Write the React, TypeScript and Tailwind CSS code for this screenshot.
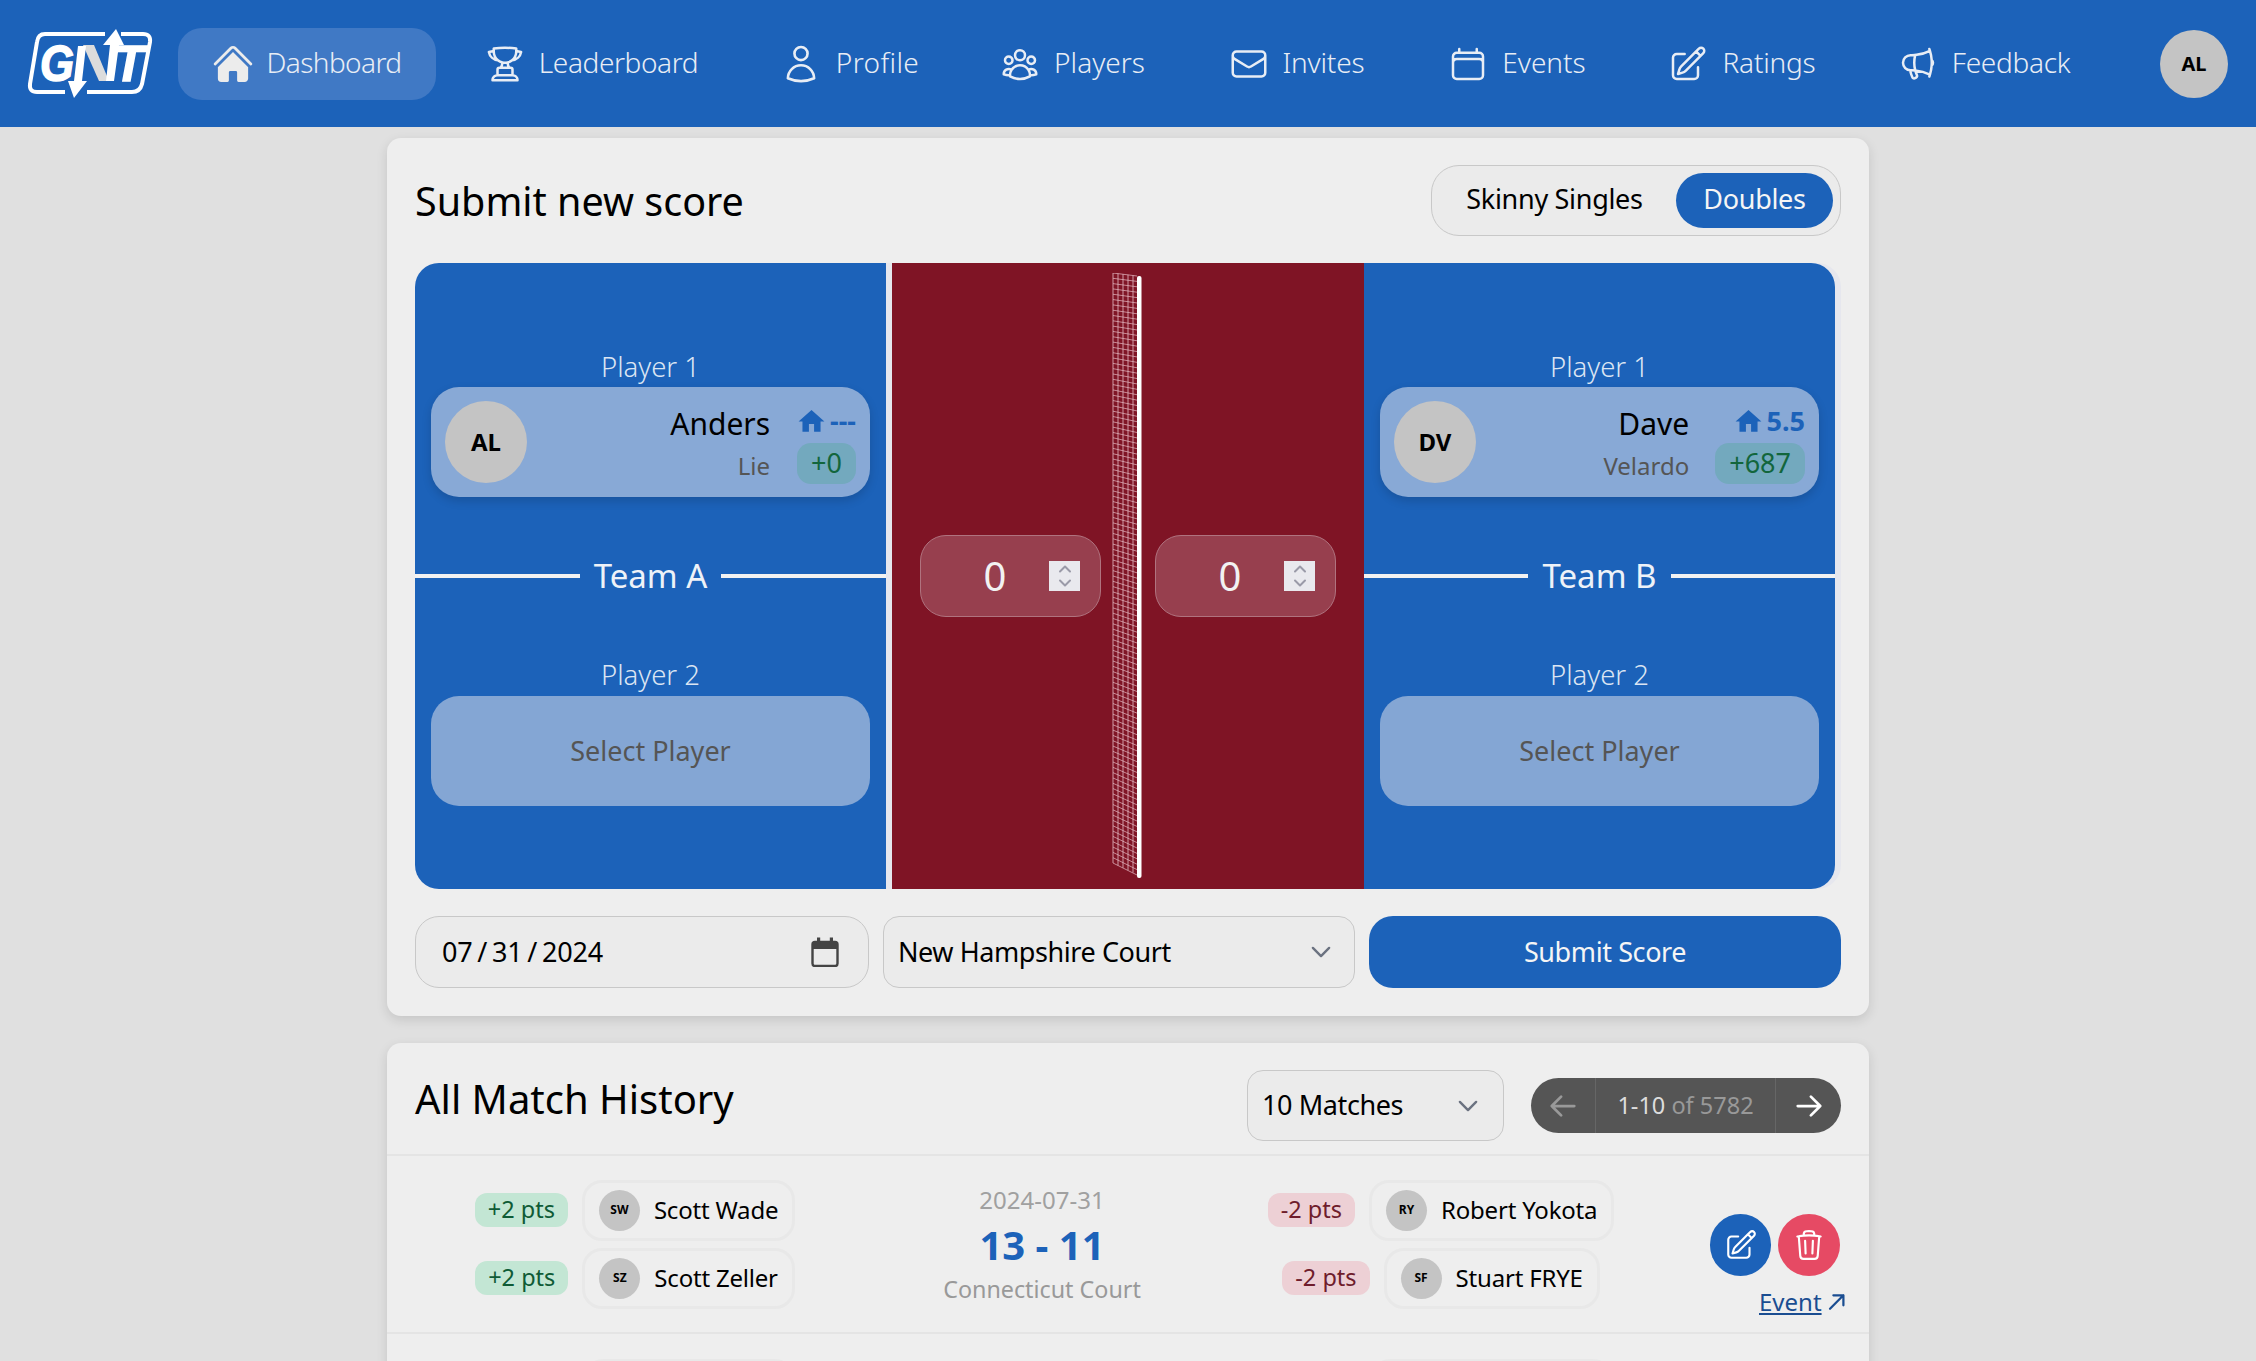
import React from "react";
import {
  HiHome,
  HiOutlineTrophy,
  HiOutlineUser,
  HiOutlineUserGroup,
  HiOutlineEnvelope,
  HiOutlineCalendar,
  HiOutlinePencilSquare,
  HiOutlineMegaphone,
  HiOutlineTrash,
  HiOutlineArrowLeft,
  HiOutlineArrowRight,
  HiOutlineArrowUpRight,
  HiOutlineChevronDown,
  HiOutlineChevronUp,
} from "react-icons/hi2";
import { MdHome } from "react-icons/md";

function Logo() {
  const font = "'Liberation Sans', sans-serif";
  return (
    <svg width="126" height="72" viewBox="26 28 126 72" className="shrink-0">
      <path d="M44 34 H142 Q150 34 149 42 L141 84 Q139 92 131 92 H36 Q28 92 29 84 L36 42 Q37 34 44 34 Z" fill="none" stroke="#fff" strokeWidth="4" />
      <rect x="104" y="30" width="16" height="8" fill="#1c62b9" />
      <rect x="64" y="88" width="22" height="8" fill="#1c62b9" />
      <text x="39" y="81" fontFamily={font} fontWeight="700" fontStyle="italic" fontSize="50" fill="#fff" stroke="#fff" strokeWidth="1.5" textLength="34" lengthAdjust="spacingAndGlyphs">G</text>
      <polygon points="82,45 93,45 108,81 98,81" fill="#dcdcdc" />
      <text x="113" y="81" fontFamily={font} fontWeight="700" fontStyle="italic" fontSize="50" fill="#fff" stroke="#fff" strokeWidth="1.5" textLength="30" lengthAdjust="spacingAndGlyphs">T</text>
      <polygon points="115,29 123,45 118,45 113,81 105,81 109,45 102,45" fill="#fff" />
      <polygon points="73,98 86,81 81,81 85,46 77,46 73,81 67,81" fill="#fff" />
    </svg>
  );
}

function Net() {
  const rows = Array.from({ length: 112 }, (_, i) => i / 111);
  const cols = [0, 1, 2, 3, 4];
  return (
    <svg width="34" height="610" viewBox="0 0 34 610" className="absolute left-[220px] top-[10px]">
      {rows.map((t) => (
        <line key={t} x1="1" y1={t * 590} x2="25" y2={3 + t * 599} stroke="#e8bcc6" strokeWidth="1" opacity="0.7" />
      ))}
      {cols.map((c) => (
        <line key={c} x1={1 + c * 5} y1={c * 0.6} x2={1 + c * 5} y2={590 + c * 2.4} stroke="#e8bcc6" strokeWidth="1" opacity="0.8" />
      ))}
      <rect x="25" y="3" width="4.5" height="602" rx="2" fill="#fff" />
    </svg>
  );
}

function NavItem({ w, icon, label, active, track }: { w: string; icon: React.ReactNode; label: string; active?: boolean; track?: string }) {
  return (
    <div className={`${w} h-[72px] flex items-center justify-center gap-[14px] rounded-[24px] text-[28px] font-light text-[#e8edf5] ${active ? "bg-[#4079c5]" : "pr-[2px]"}`}>
      {icon}
      <span className={`pb-[3px] ${track ?? ""}`}>{label}</span>
    </div>
  );
}

function Avatar({ t, cls }: { t: string; cls: string }) {
  return <div className={`rounded-full bg-[#c4c4c4] text-black font-bold flex items-center justify-center shrink-0 ${cls}`}>{t}</div>;
}

function PlayerCard({ a, first, last, rating, delta }: { a: string; first: string; last: string; rating: string; delta: string }) {
  return (
    <div className="h-[110px] rounded-[28px] bg-[#88a9d6] shadow-[0_4px_10px_rgba(0,0,0,0.15)] pl-[14px] pr-[14px] flex items-center">
      <Avatar t={a} cls="w-[82px] h-[82px] text-[24px]" />
      <div className="flex-1 flex flex-col items-end mr-[26px] pt-[3px]">
        <div className="text-[30px] leading-[38px] text-black">{first}</div>
        <div className="text-[24px] leading-[32px] mt-[7px] text-[#555]">{last}</div>
      </div>
      <div className="flex flex-col items-end pt-[7px]">
        <div className="flex items-center gap-[3px] h-[26px] mt-[1px] mb-[9px] text-[#1c62b9] font-bold text-[27px]">
          <MdHome className="w-[31px] h-[31px]" />
          <span>{rating}</span>
        </div>
        <div className="h-[41px] px-[14px] rounded-[14px] bg-[#73a9be] text-[#12663c] text-[27px] flex items-center">{delta}</div>
      </div>
    </div>
  );
}

function TeamColumn({ team, children, round }: { team: string; children: React.ReactNode; round: string }) {
  return (
    <div className={`w-[471px] h-[626px] bg-[#1c62b9] pt-[87px] ${round}`}>
      <div className="px-[16px]">
        <div className="h-[37px] text-center text-[27.5px] leading-[34px] font-light text-[#dbe5f3]">Player 1</div>
        {children}
      </div>
      <div className="mt-[57px] h-[44px] flex items-center gap-[14px] text-[33px] text-[#eef2f8]">
        <div className="flex-1 h-[4px] bg-[#f2f2f2]" />
        <span>{team}</span>
        <div className="flex-1 h-[4px] bg-[#f2f2f2]" />
      </div>
      <div className="px-[16px] mt-[60px]">
        <div className="h-[38px] text-center text-[27.5px] leading-[34px] font-light text-[#dbe5f3]">Player 2</div>
        <div className="h-[110px] rounded-[28px] bg-[#84a6d4] text-[#555] text-[27px] flex items-center justify-center">Select Player</div>
      </div>
    </div>
  );
}

function ScoreInput() {
  return (
    <div className="w-[181px] h-[82px] rounded-[26px] bg-[#973f4e] border border-[#b0737f] flex items-center text-[40px] text-[#f2f2f2]">
      <span className="ml-[44px] w-[60px] text-center">0</span>
      <div className="ml-[24px] w-[31px] h-[30px] bg-[#e9e9ee] text-[#9a9aa8] flex flex-col items-center justify-center">
        <HiOutlineChevronUp className="w-[16px] h-[16px] -mb-[1px]" strokeWidth={3} />
        <HiOutlineChevronDown className="w-[16px] h-[16px] -mt-[1px]" strokeWidth={3} />
      </div>
    </div>
  );
}

function Chip({ a, name }: { a: string; name: string }) {
  return (
    <div className="h-[61px] rounded-[20px] border-[3px] border-[#e8e8e8] pl-[14px] pr-[14px] flex items-center gap-[14px] text-[24px] tracking-[-0.2px] text-black">
      <Avatar t={a} cls="w-[41px] h-[41px] text-[12px] tracking-normal" />
      <span>{name}</span>
    </div>
  );
}

function Pts({ t, win }: { t: string; win?: boolean }) {
  return (
    <div className={`h-[34px] px-[13px] rounded-[12px] flex items-center text-[23.5px] ${win ? "bg-[#c3e6d4] text-[#0f5b36]" : "bg-[#edd0d5] text-[#6f1d2c]"}`}>{t}</div>
  );
}

function Pair({ t, a, name, win }: { t: string; a: string; name: string; win?: boolean }) {
  return (
    <div className="flex items-center gap-[14px]">
      <Pts t={t} win={win} />
      <Chip a={a} name={name} />
    </div>
  );
}

export default function App() {
  return (
    <div className="h-[1361px] overflow-hidden bg-[#e0e0e0] font-['Noto_Sans',sans-serif]">
      <nav className="h-[127px] bg-[#1c62b9] flex items-center pl-[27px]">
        <Logo />
        <div className="ml-[25px] flex items-center gap-[15px]">
          <NavItem w="w-[258px]" active track="tracking-[-0.6px]" icon={<HiHome className="w-[44px] h-[44px] -mx-[2px] text-[#ececec]" />} label="Dashboard" />
          <NavItem w="w-[283px]" track="tracking-[-0.4px]" icon={<HiOutlineTrophy className="w-[40px] h-[40px]" />} label="Leaderboard" />
          <NavItem w="w-[203px]" track="tracking-[0.4px]" icon={<HiOutlineUser className="w-[42px] h-[42px]" />} label="Profile" />
          <NavItem w="w-[213px]" icon={<HiOutlineUserGroup className="w-[40px] h-[40px]" />} label="Players" />
          <NavItem w="w-[205px]" track="tracking-[-0.2px]" icon={<HiOutlineEnvelope className="w-[40px] h-[40px]" />} label="Invites" />
          <NavItem w="w-[206px]" icon={<HiOutlineCalendar className="w-[40px] h-[40px]" />} label="Events" />
          <NavItem w="w-[214px]" track="tracking-[-0.2px]" icon={<HiOutlinePencilSquare className="w-[40px] h-[40px]" />} label="Ratings" />
          <NavItem w="w-[240px]" track="tracking-[-0.3px]" icon={<HiOutlineMegaphone className="w-[40px] h-[40px]" />} label="Feedback" />
        </div>
        <Avatar t="AL" cls="ml-[55px] w-[68px] h-[68px] text-[20px]" />
      </nav>

      <div className="w-[1482px] ml-[387px] pt-[11px]">
        <section className="h-[878px] rounded-[14px] bg-[#eeeeee] shadow-[0_4px_12px_rgba(0,0,0,0.12)] px-[28px]">
          <div className="h-[125px] flex items-center justify-between">
            <h1 className="pt-[2px] text-[39.5px] text-black">Submit new score</h1>
            <div className="w-[410px] h-[71px] rounded-[28px] border border-[#c8c8c8] bg-[#ebebeb] flex items-center pl-[8px] pr-[7px] text-[27px] tracking-[-0.3px]">
              <div className="flex-1 text-center pr-[7px] pb-[2px] text-black">Skinny Singles</div>
              <div className="w-[157px] h-[55px] pb-[2px] rounded-[28px] bg-[#1c62b9] text-[#f5f5f5] flex items-center justify-center">Doubles</div>
            </div>
          </div>

          <div className="w-[1426px] h-[626px] rounded-[24px] bg-[#e6e7ee] flex">
            <TeamColumn team="Team A" round="rounded-l-[24px]">
              <PlayerCard a="AL" first="Anders" last="Lie" rating="---" delta="+0" />
            </TeamColumn>
            <div className="relative ml-[6px] w-[472px] h-[626px] bg-[#7f1425] flex items-center gap-[54px] pl-[28px]">
              <ScoreInput />
              <ScoreInput />
              <Net />
            </div>
            <TeamColumn team="Team B" round="rounded-r-[24px]">
              <PlayerCard a="DV" first="Dave" last="Velardo" rating="5.5" delta="+687" />
            </TeamColumn>
          </div>

          <div className="mt-[27px] flex gap-[14px] w-[1426px]">
            <div className="w-[454px] h-[72px] rounded-[24px] border border-[#c8c8c8] bg-[#ebebeb] flex items-center justify-between pl-[26px] pr-[29px] text-[27px] tracking-[-0.2px] text-black">
              <span className="[word-spacing:-2px]">07 / 31 / 2024</span>
              <svg width="28" height="30" viewBox="0 0 28 30">
                <rect x="1.5" y="5" width="25" height="24" rx="2.5" fill="none" stroke="#444" strokeWidth="2.4" />
                <rect x="1.5" y="5" width="25" height="7" fill="#444" />
                <rect x="6" y="0.5" width="3.2" height="6" fill="#444" />
                <rect x="18.8" y="0.5" width="3.2" height="6" fill="#444" />
              </svg>
            </div>
            <div className="w-[472px] h-[72px] rounded-[16px] border border-[#c8c8c8] bg-[#ebebeb] flex items-center justify-between pl-[14px] pr-[20px] text-[27px] tracking-[-0.43px] text-black">
              <span>New Hampshire Court</span>
              <HiOutlineChevronDown className="w-[26px] h-[26px] text-[#6b7280]" strokeWidth={2.2} />
            </div>
            <div className="w-[472px] h-[72px] rounded-[24px] bg-[#1c62b9] text-[#f5f5f5] text-[27px] tracking-[-0.4px] flex items-center justify-center">Submit Score</div>
          </div>
        </section>

        <section className="mt-[27px] rounded-[14px] bg-[#eeeeee] shadow-[0_4px_12px_rgba(0,0,0,0.12)]">
          <div className="h-[113px] px-[28px] flex items-center border-b-2 border-[#e4e4e4]">
            <h2 className="text-[40px] text-black">All Match History</h2>
            <div className="ml-auto mt-[14px] w-[257px] h-[71px] rounded-[16px] border border-[#c8c8c8] bg-[#ebebeb] flex items-center justify-between pl-[14px] pr-[22px] text-[27px] tracking-[-0.4px] text-black">
              <span>10 Matches</span>
              <HiOutlineChevronDown className="w-[26px] h-[26px] text-[#6b7280]" strokeWidth={2.2} />
            </div>
            <div className="ml-[27px] mt-[14px] w-[310px] h-[55px] rounded-[28px] bg-[#555555] flex items-center text-[23.5px]">
              <div className="w-[65px] h-full flex items-center justify-center border-r border-[#666]">
                <HiOutlineArrowLeft className="w-[30px] h-[30px] text-[#999]" strokeWidth={2.2} />
              </div>
              <div className="flex-1 text-center text-[#ddd]">1-10 <span className="text-[#999]">of 5782</span></div>
              <div className="w-[66px] h-full flex items-center justify-center border-l border-[#666]">
                <HiOutlineArrowRight className="w-[30px] h-[30px] text-white" strokeWidth={2.2} />
              </div>
            </div>
          </div>

          <div className="h-[178px] pl-[28px] flex items-center border-b-2 border-[#e4e4e4]">
            <div className="w-[440px] flex flex-col items-center gap-[7px]">
              <Pair t="+2 pts" a="SW" name="Scott Wade" win />
              <Pair t="+2 pts" a="SZ" name="Scott Zeller" win />
            </div>
            <div className="w-[374px] flex flex-col items-center pt-[1px]">
              <div className="text-[24px] leading-[34px] text-[#a0a0a0]">2024-07-31</div>
              <div className="text-[40px] leading-[55px] font-bold text-[#1c62b9]">13 - 11</div>
              <div className="text-[23.3px] leading-[34px] text-[#999]">Connecticut Court</div>
            </div>
            <div className="w-[424px] flex flex-col items-center gap-[7px]">
              <Pair t="-2 pts" a="RY" name="Robert Yokota" />
              <Pair t="-2 pts" a="SF" name="Stuart FRYE" />
            </div>
            <div className="ml-[57px] w-[137px] mt-[44px]">
              <div className="flex gap-[7px]">
                <div className="w-[61px] h-[62px] rounded-full bg-[#1c62b9] flex items-center justify-center text-white">
                  <HiOutlinePencilSquare className="w-[34px] h-[34px]" />
                </div>
                <div className="w-[62px] h-[62px] rounded-full bg-[#e64a64] flex items-center justify-center text-white">
                  <HiOutlineTrash className="w-[34px] h-[34px]" />
                </div>
              </div>
              <div className="mt-[10px] ml-[49px] flex items-center gap-[4px] text-[24px] leading-[32px] text-[#1a4d91]">
                <span className="underline">Event</span>
                <HiOutlineArrowUpRight className="w-[26px] h-[26px]" strokeWidth={2.5} />
              </div>
            </div>
          </div>

          <div className="h-[60px] pl-[28px] pt-[25px] flex">
            <div className="w-[440px] flex justify-center">
              <div className="w-[212px] ml-[108px] h-[60px] rounded-[20px] border-[3px] border-[#e8e8e8]" />
            </div>
            <div className="w-[374px]" />
            <div className="w-[424px] flex justify-center">
              <div className="w-[243px] ml-[100px] h-[60px] rounded-[20px] border-[3px] border-[#e8e8e8]" />
            </div>
          </div>
        </section>
      </div>
    </div>
  );
}
